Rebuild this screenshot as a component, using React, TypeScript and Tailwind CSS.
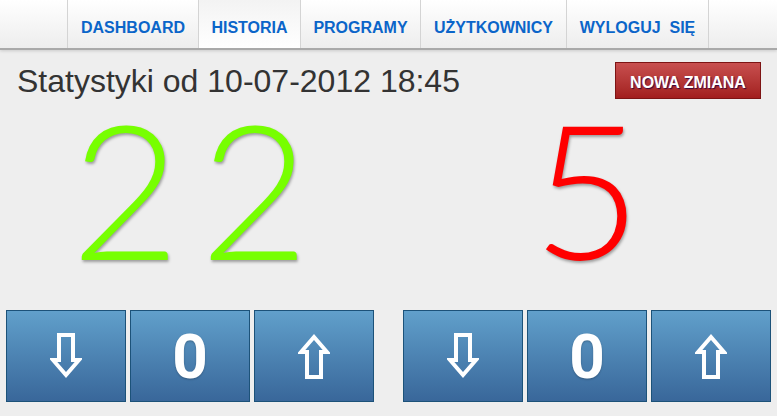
import React from "react";

const navItems: [string, string][] = [
  ["DASHBOARD", "w-[131px]"],
  ["HISTORIA", "w-[102px]"],
  ["PROGRAMY", "w-[120px]"],
  ["UŻYTKOWNICY", "w-[146px]"],
  ["WYLOGUJ  SIĘ", "w-[142px]"],
];

function DownArrow() {
  return (
    <svg width="32" height="46" viewBox="0 0 32 46" fill="none">
      <path d="M8 2 H22 V27 H28 L15 42 L2 27 H8 Z" stroke="white" strokeWidth="4" strokeLinejoin="miter" transform="translate(1,0)" />
    </svg>
  );
}

function UpArrow() {
  return (
    <svg width="32" height="46" viewBox="0 0 32 46" fill="none">
      <path d="M8 44 H22 V19 H28 L15 4 L2 19 H8 Z" stroke="white" strokeWidth="4" strokeLinejoin="miter" transform="translate(1,0)" />
    </svg>
  );
}

function Btn({ children }: { children: React.ReactNode }) {
  return (
    <div className="w-[120px] h-[92px] border border-[#1c5279] bg-gradient-to-b from-[#61a0cb] to-[#39679a] flex items-center justify-center text-white">
      {children}
    </div>
  );
}

function Group() {
  return (
    <div className="flex gap-[4px]">
      <Btn>
        <DownArrow />
      </Btn>
      <Btn>
        <span
          className="font-bold text-[62px] leading-none pt-[2px]"
          style={{ fontFamily: "Roboto, 'Liberation Sans', sans-serif", textShadow: "0 1px 2px rgba(0,0,0,0.25)" }}
        >
          0
        </span>
      </Btn>
      <Btn>
        <UpArrow />
      </Btn>
    </div>
  );
}

export default function App() {
  return (
    <div className="w-[777px] h-[416px] bg-[#eeeeee] overflow-hidden" style={{ fontFamily: "'Liberation Sans', Arial, sans-serif" }}>
      <div className="h-[50px] bg-gradient-to-b from-[#ffffff] to-[#ededed] border-b-2 border-[#a9a9a9] shadow-[0_1px_3px_rgba(0,0,0,0.15)] flex justify-center">
        <div className="flex border-r border-[#d4d4d4] mr-[1px]">
          {navItems.map(([t, w]) => (
            <div
              key={t}
              className={`${w} h-[48px] border-l border-[#d4d4d4] text-center pt-[19px] leading-[18px] text-[16px] font-bold text-[#0b65c9] whitespace-pre ${
                t === "HISTORIA" ? "bg-gradient-to-b from-[#f3f3f3] to-[#ffffff]" : ""
              }`}
            >
              {t}
            </div>
          ))}
        </div>
      </div>

      <div className="mt-[12px] h-[37px] flex items-center justify-between pl-[17px] pr-[16px]">
        <div className="text-[32px] leading-[32px] text-[#333333]">Statystyki od 10-07-2012 18:45</div>
        <div
          className="w-[146px] h-[37px] border border-[#7d1414] bg-gradient-to-b from-[#c84f4f] to-[#a21e1e] text-white font-bold text-[16px] flex items-center justify-center pt-[4px]"
          style={{ textShadow: "1px 1px 1px rgba(40,0,60,0.9)" }}
        >
          NOWA ZMIANA
        </div>
      </div>

      <div className="h-[211px] flex pl-[6px] pr-[6px] gap-[29px] pb-[36px]">
        <div className="w-[368px] flex items-center justify-center">
          <span
            className="text-[188px] leading-[140px] text-[#77ff00] tracking-[20px] pl-[20px] font-light"
            style={{ fontFamily: "Lato, sans-serif", textShadow: "1px 2px 3px rgba(0,0,0,0.35)" }}
          >
            22
          </span>
        </div>
        <div className="w-[368px] flex items-center justify-center">
          <span
            className="text-[188px] leading-[140px] text-[#ff0000] font-light"
            style={{ fontFamily: "Lato, sans-serif", textShadow: "1px 2px 3px rgba(0,0,0,0.35)" }}
          >
            5
          </span>
        </div>
      </div>

      <div className="flex pl-[6px] pr-[6px] gap-[29px]">
        <Group />
        <Group />
      </div>
    </div>
  );
}
